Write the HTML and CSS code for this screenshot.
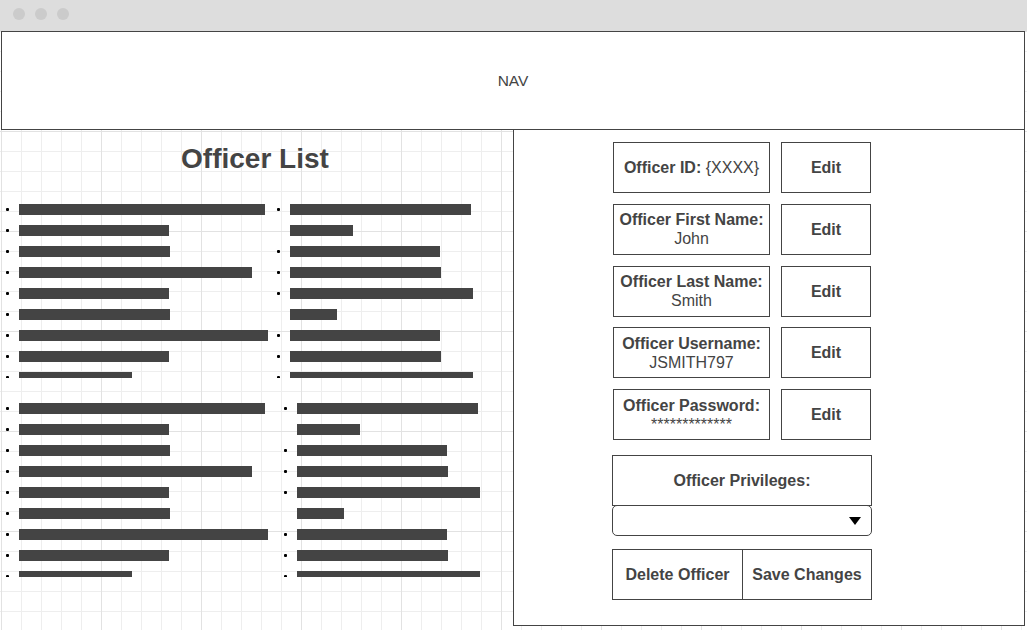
FILE: index.html
```html
<!DOCTYPE html>
<html>
<head>
<meta charset="utf-8">
<title>Officer List</title>
<link rel="stylesheet" href="styles.css">
</head>
<body>
<div class="titlebar">
  <span class="dot"></span><span class="dot"></span><span class="dot"></span>
</div>
<div class="canvas">
  <header class="nav">NAV</header>
  <div class="main">
    <section class="list-area">
      <h1 class="title">Officer List</h1>
      <div class="block">
        <ul class="col col-a">
          <li class="row"><i class="bullet"></i><b class="bar" style="width:246px"></b></li>
          <li class="row"><i class="bullet"></i><b class="bar" style="width:150px"></b></li>
          <li class="row"><i class="bullet"></i><b class="bar" style="width:151px"></b></li>
          <li class="row"><i class="bullet"></i><b class="bar" style="width:233px"></b></li>
          <li class="row"><i class="bullet"></i><b class="bar" style="width:150px"></b></li>
          <li class="row"><i class="bullet"></i><b class="bar" style="width:151px"></b></li>
          <li class="row"><i class="bullet"></i><b class="bar" style="width:249px"></b></li>
          <li class="row"><i class="bullet"></i><b class="bar" style="width:150px"></b></li>
          <li class="row"><i class="bullet"></i><b class="bar" style="width:113px"></b></li>
        </ul>
        <ul class="col col-b">
          <li class="row"><i class="bullet"></i><b class="bar" style="width:181px"></b></li>
          <li class="row"><i class="bullet none"></i><b class="bar" style="width:63px"></b></li>
          <li class="row"><i class="bullet"></i><b class="bar" style="width:150px"></b></li>
          <li class="row"><i class="bullet"></i><b class="bar" style="width:151px"></b></li>
          <li class="row"><i class="bullet"></i><b class="bar" style="width:183px"></b></li>
          <li class="row"><i class="bullet none"></i><b class="bar" style="width:47px"></b></li>
          <li class="row"><i class="bullet"></i><b class="bar" style="width:150px"></b></li>
          <li class="row"><i class="bullet"></i><b class="bar" style="width:151px"></b></li>
          <li class="row"><i class="bullet"></i><b class="bar" style="width:183px"></b></li>
        </ul>
      </div>
      <div class="block block-2">
        <ul class="col col-a">
          <li class="row"><i class="bullet"></i><b class="bar" style="width:246px"></b></li>
          <li class="row"><i class="bullet"></i><b class="bar" style="width:150px"></b></li>
          <li class="row"><i class="bullet"></i><b class="bar" style="width:151px"></b></li>
          <li class="row"><i class="bullet"></i><b class="bar" style="width:233px"></b></li>
          <li class="row"><i class="bullet"></i><b class="bar" style="width:150px"></b></li>
          <li class="row"><i class="bullet"></i><b class="bar" style="width:151px"></b></li>
          <li class="row"><i class="bullet"></i><b class="bar" style="width:249px"></b></li>
          <li class="row"><i class="bullet"></i><b class="bar" style="width:150px"></b></li>
          <li class="row"><i class="bullet"></i><b class="bar" style="width:113px"></b></li>
        </ul>
        <ul class="col col-b shifted">
          <li class="row"><i class="bullet"></i><b class="bar" style="width:181px"></b></li>
          <li class="row"><i class="bullet none"></i><b class="bar" style="width:63px"></b></li>
          <li class="row"><i class="bullet"></i><b class="bar" style="width:150px"></b></li>
          <li class="row"><i class="bullet"></i><b class="bar" style="width:151px"></b></li>
          <li class="row"><i class="bullet"></i><b class="bar" style="width:183px"></b></li>
          <li class="row"><i class="bullet none"></i><b class="bar" style="width:47px"></b></li>
          <li class="row"><i class="bullet"></i><b class="bar" style="width:150px"></b></li>
          <li class="row"><i class="bullet"></i><b class="bar" style="width:151px"></b></li>
          <li class="row"><i class="bullet"></i><b class="bar" style="width:183px"></b></li>
        </ul>
      </div>
    </section>
    <section class="panel">
      <div class="fields">
        <div class="field-row">
          <div class="field"><span><strong>Officer ID:</strong> {XXXX}</span></div>
          <div class="edit">Edit</div>
        </div>
        <div class="field-row">
          <div class="field"><strong>Officer First Name:</strong><span>John</span></div>
          <div class="edit">Edit</div>
        </div>
        <div class="field-row">
          <div class="field"><strong>Officer Last Name:</strong><span>Smith</span></div>
          <div class="edit">Edit</div>
        </div>
        <div class="field-row">
          <div class="field"><strong>Officer Username:</strong><span>JSMITH797</span></div>
          <div class="edit">Edit</div>
        </div>
        <div class="field-row">
          <div class="field"><strong>Officer Password:</strong><span class="stars">*************</span></div>
          <div class="edit">Edit</div>
        </div>
      </div>
      <div class="privileges">
        <div class="priv-label">Officer Privileges:</div>
        <div class="select"><span class="caret"></span></div>
      </div>
      <div class="actions">
        <div class="action">Delete Officer</div>
        <div class="action">Save Changes</div>
      </div>
    </section>
  </div>
</div>
</body>
</html>
```

FILE: styles.css
```css
* { box-sizing: border-box; }

html, body {
  margin: 0;
  padding: 0;
  background: #ffffff;
  font-family: "Liberation Sans", Arial, sans-serif;
  color: #444444;
}

.titlebar {
  height: 31px;
  background: #dddddd;
  display: flex;
  align-items: center;
  gap: 10px;
  padding: 0 0 3px 13px;
}

.dot {
  width: 12px;
  height: 12px;
  border-radius: 50%;
  background: #cbcbcb;
}

.canvas {
  height: 599px;
  padding-left: 1px;
  background-color: #ffffff;
  background-image:
    linear-gradient(to right, #e2e2e2 1px, transparent 1px),
    linear-gradient(to bottom, #e2e2e2 1px, transparent 1px),
    linear-gradient(to right, #eeeeee 1px, transparent 1px),
    linear-gradient(to bottom, #eeeeee 1px, transparent 1px);
  background-size: 100px 100px, 100px 100px, 20px 20px, 20px 20px;
  background-position: 1px 0, 1px 0, 1px 0, 1px 0;
}

.nav {
  width: 1024px;
  height: 99px;
  border: 1px solid #444444;
  background: #ffffff;
  display: flex;
  align-items: center;
  justify-content: center;
  font-size: 15.5px;
}

.main {
  display: flex;
}

.list-area {
  width: 512px;
}

.title {
  margin: 0;
  padding: 13px 4px 0 0;
  height: 45px;
  line-height: 32px;
  font-size: 28px;
  font-weight: bold;
  text-align: center;
  color: #444444;
}

.block {
  display: flex;
  height: 179px;
  overflow: hidden;
  margin-top: 24px;
}

.block-2 {
  margin-top: 20px;
}

.col {
  list-style: none;
  margin: 0;
  padding: 0;
}

.col-a {
  width: 271px;
  padding-left: 5px;
}

.col-b {
  padding-left: 5px;
}

.col-b.shifted {
  padding-left: 12px;
}

.row {
  height: 21px;
  display: flex;
  align-items: center;
}

.bullet {
  width: 3px;
  height: 3px;
  border-radius: 1px;
  background: #000000;
  margin-right: 10px;
  flex: none;
}

.bullet.none {
  background: transparent;
}

.bar {
  display: block;
  height: 11px;
  background: #444444;
  flex: none;
}

.panel {
  width: 512px;
  height: 496px;
  background: #ffffff;
  border: 1px solid #444444;
  border-top: none;
  padding: 12px 0 0 99px;
}

.fields {
  display: flex;
  flex-direction: column;
  gap: 10.75px;
}

.field-row {
  display: flex;
  gap: 11px;
  height: 51px;
}

.field, .edit, .priv-label, .action {
  border: 1px solid #444444;
  display: flex;
  flex-direction: column;
  align-items: center;
  justify-content: center;
  font-size: 16px;
  line-height: 19px;
  text-align: center;
}

.field {
  width: 157px;
}

.field strong {
  font-weight: bold;
}

.stars {
  line-height: 19px;
}

.edit {
  width: 90px;
  font-weight: bold;
}

.privileges {
  width: 260px;
  margin: 15px 0 0 -1px;
}

.priv-label {
  height: 51px;
  font-weight: bold;
}

.select {
  height: 31px;
  margin-top: -1px;
  border: 1px solid #444444;
  border-radius: 5px;
  display: flex;
  align-items: center;
  justify-content: flex-end;
  padding-right: 10px;
}

.caret {
  width: 0;
  height: 0;
  border-left: 6px solid transparent;
  border-right: 6px solid transparent;
  border-top: 8px solid #000000;
  margin-top: 1px;
}

.actions {
  display: flex;
  width: 260px;
  height: 51px;
  margin: 13px 0 0 -1px;
}

.action {
  font-weight: bold;
  flex: none;
}

.action:first-child {
  width: 131px;
}

.action:last-child {
  width: 129px;
  border-left: none;
}
```
